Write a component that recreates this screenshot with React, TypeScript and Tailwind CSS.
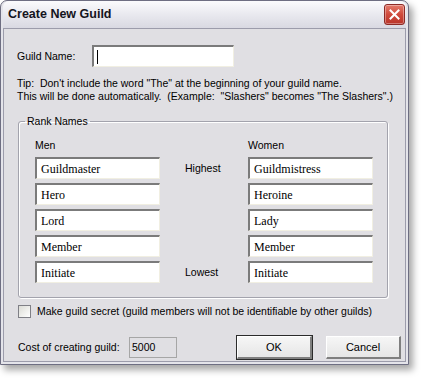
import { Fragment, useState } from 'react';

const men = ['Guildmaster', 'Hero', 'Lord', 'Member', 'Initiate'];
const women = ['Guildmistress', 'Heroine', 'Lady', 'Member', 'Initiate'];

function RankInput({ value }: { value: string }) {
  return (
    <div className="h-[22px] w-[125px] border-t-2 border-l-2 border-b border-r border-t-[#7b7b7b] border-l-[#7b7b7b] border-b-[#f1efe2] border-r-[#f1efe2] bg-white pl-[4px] flex items-center font-['Liberation_Serif',serif] text-[12px] text-black leading-none">
      {value}
    </div>
  );
}

function Button({ label, isDefault }: { label: string; isDefault?: boolean }) {
  return (
    <div
      className={`w-[75px] h-[23px] flex items-center justify-center text-[11px] text-black bg-gradient-to-b from-[#f6f6f6] to-[#e6e6e6] border-t border-l border-t-white border-l-white border-b-2 border-r-2 border-b-[#7f7f7f] border-r-[#7f7f7f] ${
        isDefault ? 'outline outline-1 outline-[#2b2b2b]' : ''
      }`}
    >
      {label}
    </div>
  );
}

export default function App() {
  const [secret, setSecret] = useState(false);

  return (
    <div className="w-[426px] h-[384px] bg-white font-['Liberation_Sans',Arial,sans-serif]">
      {/* Window */}
      <div className="w-[409px] h-[365px] flex flex-col rounded-t-[7px] border border-[#6e6e82] bg-[#e4e4ea] px-[2px] pb-[2px] shadow-[4px_5px_7px_rgba(0,0,0,0.35)]">
        {/* Title bar */}
        <div className="h-[27px] flex items-center justify-between rounded-t-[6px] bg-gradient-to-b from-[#fbfbfd] via-[#e9e9ef] to-[#d9d9e2] pl-[5px] pr-[1px]">
          <span className="text-[12.5px] font-bold text-[#141420]">Create New Guild</span>
          <div className="w-[21px] h-[21px] rounded-[3px] border border-[#8c2a26] bg-gradient-to-b from-[#e47a6c] via-[#cf4a3c] to-[#b9342a] flex items-center justify-center shadow-[inset_0_0_0_1px_rgba(255,255,255,0.35)]">
            <svg width="11" height="11" viewBox="0 0 11 11">
              <path d="M1.5 1.5 L9.5 9.5 M9.5 1.5 L1.5 9.5" stroke="white" strokeWidth="2" strokeLinecap="square" />
            </svg>
          </div>
        </div>

        {/* Client area */}
        <div className="flex-1 flex flex-col border border-[#9c9cab] bg-[#e0dfe3] text-[10.5px] text-black leading-[13px]">
          {/* Guild name */}
          <div className="flex items-center mt-[16px] ml-[13px] h-[22px]">
            <span className="w-[75px]">Guild Name:</span>
            <div className="w-[142px] h-[22px] border-t-2 border-l-2 border-b border-r border-t-[#7b7b7b] border-l-[#7b7b7b] border-b-[#f1efe2] border-r-[#f1efe2] bg-white flex items-center pl-[3px]">
              <div className="w-[1px] h-[14px] bg-black" />
            </div>
          </div>

          {/* Tip */}
          <div className="mt-[10px] ml-[13px] whitespace-pre">
            <div>{'Tip:  Don\'t include the word "The" at the beginning of your guild name.'}</div>
            <div>{'This will be done automatically.  (Example:  "Slashers" becomes "The Slashers".)'}</div>
          </div>

          {/* Rank names group */}
          <fieldset className="mt-[12px] ml-[14px] w-[370px] border border-[#a3a3ad] rounded-[3px] pl-[16px] pb-[14px] shadow-[1px_1px_0_white,inset_1px_1px_0_white]">
            <legend className="-ml-[10px] px-[2px] leading-[13px]">Rank Names</legend>
            <div className="grid grid-cols-[125px_88px_125px] mt-[11px] gap-y-[4px]">
              <div className="mb-[1px]">Men</div>
              <div />
              <div className="mb-[1px]">Women</div>
              {men.map((m, i) => (
                <Fragment key={i}>
                  <RankInput value={m} />
                  <div className="pl-[25px] flex items-center">
                    {i === 0 ? 'Highest' : i === men.length - 1 ? 'Lowest' : ''}
                  </div>
                  <RankInput value={women[i]} />
                </Fragment>
              ))}
            </div>
          </fieldset>

          {/* Secret checkbox */}
          <label className="flex items-center mt-[7px] ml-[14px] h-[13px] cursor-default">
            <span
              onClick={() => setSecret(!secret)}
              className="w-[13px] h-[13px] border border-[#7f7f86] bg-gradient-to-br from-[#dcdcd6] to-white flex items-center justify-center"
            >
              {secret && (
                <svg width="9" height="9" viewBox="0 0 9 9">
                  <path d="M1 4 L3.5 6.5 L8 1.5" stroke="#21a121" strokeWidth="2" fill="none" />
                </svg>
              )}
            </span>
            <span className="ml-[6px]">Make guild secret (guild members will not be identifiable by other guilds)</span>
          </label>

          {/* Cost + buttons */}
          <div className="flex items-center mt-[18px] ml-[14px] mr-[4px] h-[23px]">
            <span className="w-[111px]">Cost of creating guild:</span>
            <div className="w-[48px] h-[21px] border border-[#a6a6a6] bg-[#e0dfe3] flex items-center pl-[2px]">5000</div>
            <div className="ml-auto flex gap-[14px]">
              <Button label="OK" isDefault />
              <Button label="Cancel" />
            </div>
          </div>
        </div>
      </div>
    </div>
  );
}
